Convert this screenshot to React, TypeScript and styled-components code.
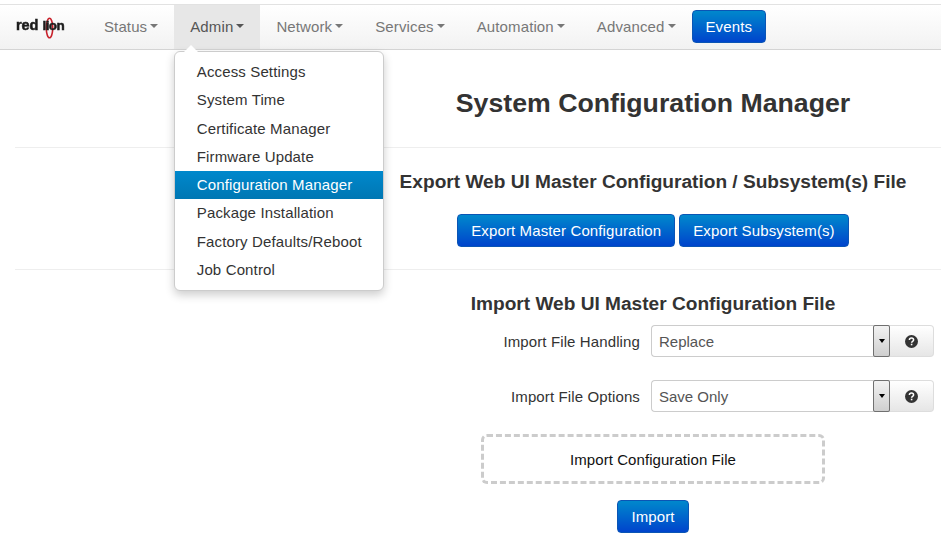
import styled, { createGlobalStyle } from "styled-components"

const GlobalStyle = createGlobalStyle`
  html, body { margin: 0; padding: 0; background: #fff; }
  body { font-family: "Liberation Sans", Arial, sans-serif; color: #333; overflow: hidden; }
  * { box-sizing: border-box; }
`

const Page = styled.div`
  width: 941px;
  height: 549px;
  padding-top: 4px;
  position: relative;
  overflow: hidden;
`

const Navbar = styled.nav`
  height: 46px;
  display: flex;
  align-items: stretch;
  background: linear-gradient(to bottom, #ffffff 0%, #f2f2f2 100%);
  border-top: 1px solid #e2e2e2;
  border-bottom: 1px solid #d4d4d4;
`

const Brand = styled.div`
  width: 88px;
  padding: 6px 0 0 15px;
`

const NavItem = styled.div<{ $open?: boolean }>`
  position: relative;
  display: flex;
  align-items: center;
  gap: 3px;
  padding: 0 16px 2px;
  font-size: 15px;
  letter-spacing: 0.12px;
  color: ${(p) => (p.$open ? "#555" : "#777")};
  background: ${(p) => (p.$open ? "#e7e7e7" : "transparent")};
`

const Caret = styled.span`
  width: 0;
  height: 0;
  border-top: 4px solid currentColor;
  border-left: 4px solid transparent;
  border-right: 4px solid transparent;
`

const BlueButton = styled.button`
  height: 33px;
  padding: 0 13px;
  font: 15px "Liberation Sans", Arial, sans-serif;
  letter-spacing: 0.12px;
  color: #fff;
  border: 1px solid #0a55b5;
  border-radius: 4px;
  background: linear-gradient(to bottom, #0088cc 0%, #0044cc 100%);
`

const EventsButton = styled(BlueButton)`
  align-self: center;
  margin-top: -1px;
`

const Menu = styled.div`
  position: absolute;
  top: 46px;
  left: 0;
  width: 210px;
  height: 240px;
  padding: 6px 0;
  background: #fff;
  border: 1px solid #ccc;
  border-radius: 6px;
  box-shadow: 0 4px 10px rgba(0, 0, 0, 0.2);
  z-index: 10;

  &::before {
    content: "";
    position: absolute;
    top: -7px;
    left: 9px;
    width: 0;
    height: 0;
    border-left: 7px solid transparent;
    border-right: 7px solid transparent;
    border-bottom: 7px solid #fff;
  }
`

const MenuItem = styled.div<{ $active?: boolean }>`
  height: 28.3px;
  line-height: 28px;
  padding-left: 21.5px;
  font-size: 15px;
  letter-spacing: 0.14px;
  white-space: nowrap;
  color: ${(p) => (p.$active ? "#fff" : "#333")};
  background: ${(p) => (p.$active ? "linear-gradient(to bottom, #0088cc, #0077b3)" : "transparent")};
`

const Main = styled.main`
  padding-left: 15px;
`

const Section = styled.section<{ $height: number }>`
  height: ${(p) => p.$height}px;
  padding-left: 350px;
  display: flex;
  flex-direction: column;
  align-items: center;
  border-bottom: 1px solid #eee;

  &:last-child {
    border-bottom: 0;
  }
`

const PageTitle = styled.h1`
  margin: 36px 0 0;
  font-size: 26.7px;
  line-height: 34px;
  color: #333;
  white-space: nowrap;
`

const ExportTitle = styled.h2`
  margin: 21px 0 0;
  font-size: 19.1px;
  line-height: 26px;
  color: #333;
  white-space: nowrap;
`

const ImportTitle = styled.h3`
  margin: 21px 0 0;
  font-size: 19.1px;
  line-height: 26px;
  color: #333;
  white-space: nowrap;
`

const ButtonRow = styled.div`
  display: flex;
  gap: 4px;
  margin-top: 19px;
`

const FormRow = styled.div<{ $top: number }>`
  align-self: flex-end;
  width: 576px;
  margin-top: ${(p) => p.$top}px;
  display: flex;
  align-items: center;
`

const FieldLabel = styled.label`
  width: 275px;
  margin-right: 11px;
  text-align: right;
  font-size: 15px;
  letter-spacing: 0.12px;
  color: #333;
`

const SelectBox = styled.div`
  width: 239px;
  height: 32px;
  display: flex;
  justify-content: space-between;
  align-items: stretch;
  padding-left: 7px;
  font-size: 15px;
  line-height: 31px;
  color: #555;
  background: #fff;
  border: 1px solid #ccc;
  border-right: 0;
  border-radius: 4px 0 0 4px;
`

const SelectArrow = styled.span`
  width: 17px;
  margin-top: -1px;
  margin-bottom: -1px;
  display: flex;
  align-items: center;
  justify-content: center;
  border: 1px solid #707070;
  border-radius: 2px;
  background: linear-gradient(to bottom, #f2f2f2, #cfcfcf);

  &::after {
    content: "";
    border-top: 4px solid #000;
    border-left: 3.5px solid transparent;
    border-right: 3.5px solid transparent;
  }
`

const HelpButton = styled.div`
  width: 44px;
  height: 32px;
  display: flex;
  align-items: center;
  justify-content: center;
  border: 1px solid #ddd;
  border-left: 0;
  border-radius: 0 4px 4px 0;
  background: linear-gradient(to bottom, #ffffff, #e6e6e6);
`

const DropZone = styled.div`
  width: 344px;
  height: 50px;
  margin-top: 22px;
  padding-top: 1px;
  display: flex;
  align-items: center;
  justify-content: center;
  font-size: 15px;
  letter-spacing: 0.07px;
  color: #111;
  border: 3px dashed #ccc;
  border-radius: 6px;
`

const ImportButton = styled(BlueButton)`
  margin-top: 16px;
`

function Logo() {
  return (
    <svg width="52" height="34" viewBox="0 0 52 34" style={{ filter: "blur(0.4px)" }}>
      <ellipse cx="34.5" cy="17" rx="3.2" ry="9.8" fill="none" stroke="#c8202a" strokeWidth="1.6" />
      <text x="1" y="19" fontFamily="Liberation Sans" fontWeight="700" fontSize="14.5" letterSpacing="-0.1" fill="#1c1c1c" stroke="#1c1c1c" strokeWidth="0.5">red</text>
      <text x="27.5" y="19" fontFamily="Liberation Sans" fontWeight="700" fontSize="13.5" letterSpacing="-0.6" fill="#1c1c1c" stroke="#1c1c1c" strokeWidth="0.5">lion</text>
    </svg>
  )
}

function HelpIcon() {
  return (
    <svg width="13" height="13" viewBox="0 0 13 13">
      <circle cx="6.5" cy="6.5" r="6.5" fill="#333" />
      <path d="M4.4 5a2.1 2 0 0 1 4.2 0c0 1.4-2 1.3-2 2.7" fill="none" stroke="#fff" strokeWidth="1.5" />
      <rect x="5.8" y="8.7" width="1.6" height="1.6" fill="#fff" />
    </svg>
  )
}

const adminItems = [
  "Access Settings",
  "System Time",
  "Certificate Manager",
  "Firmware Update",
  "Configuration Manager",
  "Package Installation",
  "Factory Defaults/Reboot",
  "Job Control",
]

export default function App() {
  return (
    <Page>
      <GlobalStyle />
      <Navbar>
        <Brand><Logo /></Brand>
        <NavItem>Status<Caret /></NavItem>
        <NavItem $open>
          Admin<Caret />
          <Menu>
            {adminItems.map((item) => (
              <MenuItem key={item} $active={item === "Configuration Manager"}>{item}</MenuItem>
            ))}
          </Menu>
        </NavItem>
        <NavItem>Network<Caret /></NavItem>
        <NavItem>Services<Caret /></NavItem>
        <NavItem>Automation<Caret /></NavItem>
        <NavItem>Advanced<Caret /></NavItem>
        <EventsButton>Events</EventsButton>
      </Navbar>
      <Main>
        <Section $height={98}>
          <PageTitle>System Configuration Manager</PageTitle>
        </Section>
        <Section $height={122}>
          <ExportTitle>Export Web UI Master Configuration / Subsystem(s) File</ExportTitle>
          <ButtonRow>
            <BlueButton>Export Master Configuration</BlueButton>
            <BlueButton>Export Subsystem(s)</BlueButton>
          </ButtonRow>
        </Section>
        <Section $height={279}>
          <ImportTitle>Import Web UI Master Configuration File</ImportTitle>
          <FormRow $top={8}>
            <FieldLabel>Import File Handling</FieldLabel>
            <SelectBox>Replace<SelectArrow /></SelectBox>
            <HelpButton><HelpIcon /></HelpButton>
          </FormRow>
          <FormRow $top={23}>
            <FieldLabel>Import File Options</FieldLabel>
            <SelectBox>Save Only<SelectArrow /></SelectBox>
            <HelpButton><HelpIcon /></HelpButton>
          </FormRow>
          <DropZone>Import Configuration File</DropZone>
          <ImportButton>Import</ImportButton>
        </Section>
      </Main>
    </Page>
  )
}
